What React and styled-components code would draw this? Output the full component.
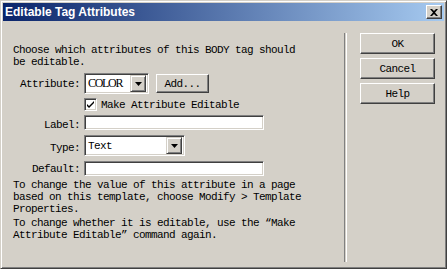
import React from 'react'
import styled, { createGlobalStyle } from 'styled-components'

const GlobalStyle = createGlobalStyle`
  html, body {
    margin: 0;
    padding: 0;
    background: #d4d0c8;
  }
`

const mono = `"Liberation Mono", "DejaVu Sans Mono", monospace`

const Window = styled.div`
  box-sizing: border-box;
  width: 447px;
  height: 269px;
  background: #d4d0c8;
  border: 1px solid;
  border-color: #d4d0c8 #404040 #404040 #d4d0c8;
  box-shadow: inset 1px 1px #ffffff, inset -1px -1px #808080;
  padding: 2px;
  display: flex;
  flex-direction: column;
`

const TitleBar = styled.div`
  height: 18px;
  background: linear-gradient(to right, #0a246a, #a6caf0);
  display: flex;
  align-items: center;
  justify-content: space-between;
  padding: 0 2px 0 2px;
`

const Title = styled.span`
  color: #ffffff;
  font: bold 12px "Liberation Sans", Arial, sans-serif;
`

const CloseButton = styled.div`
  box-sizing: border-box;
  width: 16px;
  height: 14px;
  background: #d4d0c8;
  border: 1px solid;
  border-color: #ffffff #404040 #404040 #ffffff;
  box-shadow: inset -1px -1px #808080;
  display: flex;
  align-items: center;
  justify-content: center;
`

const Body = styled.div`
  flex: 1;
  display: flex;
  padding: 12px 0 0 10px;
`

const Main = styled.div`
  width: 331px;
  font-family: ${mono};
  font-size: 11px;
  letter-spacing: -0.6px;
  color: #000000;
  padding-top: 11px;
`

const Para = styled.p`
  margin: 0 0 ${({ $gap }) => $gap || 0}px 0;
  line-height: 12px;
  white-space: pre;
`

const Form = styled.div`
  display: grid;
  grid-template-columns: 67px auto;
  column-gap: 4px;
  align-items: center;
  margin-bottom: 3px;
`

const Label = styled.span`
  text-align: right;
  white-space: pre;
`

const Row = styled.div`
  display: flex;
  align-items: center;
  gap: 7px;
  margin-bottom: ${({ $mb }) => $mb || 0}px;
`

const Select = styled.div`
  box-sizing: border-box;
  width: ${({ $w }) => $w}px;
  height: 21px;
  background: #ffffff;
  border: 1px solid;
  border-color: #808080 #ffffff #ffffff #808080;
  box-shadow: inset 1px 1px #404040, inset -1px -1px #d4d0c8;
  display: flex;
  align-items: center;
  justify-content: space-between;
  padding: 2px;
`

const SelectText = styled.span`
  padding-left: 1px;
  font-size: ${({ $narrow }) => ($narrow ? '12px' : '11px')};
  letter-spacing: ${({ $narrow }) => ($narrow ? '-1.3px' : '-0.6px')};
  font-family: ${({ $narrow }) =>
    $narrow ? `"Liberation Serif", serif` : mono};
`

const ArrowButton = styled.div`
  box-sizing: border-box;
  width: 16px;
  height: 17px;
  background: #d4d0c8;
  border: 1px solid;
  border-color: #d4d0c8 #404040 #404040 #d4d0c8;
  box-shadow: inset 1px 1px #ffffff, inset -1px -1px #808080;
  display: flex;
  align-items: center;
  justify-content: center;
`

const Button = styled.div`
  box-sizing: border-box;
  width: ${({ $w }) => $w || 75}px;
  height: ${({ $h }) => $h || 21}px;
  background: #d4d0c8;
  border: 1px solid;
  border-color: #ffffff #404040 #404040 #ffffff;
  box-shadow: inset -1px -1px #808080;
  display: flex;
  align-items: center;
  justify-content: center;
  font-family: ${mono};
  font-size: 11px;
  letter-spacing: -0.6px;
  color: #000000;
`

const Field = styled.div`
  box-sizing: border-box;
  width: 180px;
  height: 15px;
  background: #ffffff;
  border: 1px solid;
  border-color: #808080 #ffffff #ffffff #808080;
  box-shadow: inset 1px 1px #404040, inset -1px -1px #d4d0c8;
`

const CheckRow = styled.label`
  grid-column: 2;
  display: flex;
  align-items: center;
  gap: 4px;
  margin: 4px 0 4px 0;
  white-space: pre;
`

const CheckBox = styled.div`
  box-sizing: border-box;
  width: 13px;
  height: 13px;
  background: #ffffff;
  border: 1px solid;
  border-color: #808080 #ffffff #ffffff #808080;
  box-shadow: inset 1px 1px #404040, inset -1px -1px #d4d0c8;
  display: flex;
  align-items: center;
  justify-content: center;
`

const Separator = styled.div`
  width: 1px;
  margin: 0 0 4px 0;
  border-left: 1px solid #808080;
  border-right: 1px solid #ffffff;
`

const Side = styled.div`
  display: flex;
  flex-direction: column;
  gap: 4px;
  padding-left: 13px;
`

const DownArrow = () => (
  <svg width="7" height="4" viewBox="0 0 7 4">
    <path d="M0 0h7L3.5 4z" fill="#000" />
  </svg>
)

const Dropdown = ({ width, value, narrow }) => (
  <Select $w={width}>
    <SelectText $narrow={narrow}>{value}</SelectText>
    <ArrowButton>
      <DownArrow />
    </ArrowButton>
  </Select>
)

export default function App() {
  return (
    <>
      <GlobalStyle />
      <Window>
        <TitleBar>
          <Title>Editable Tag Attributes</Title>
          <CloseButton>
            <svg width="8" height="7" viewBox="0 0 8 7">
              <path
                d="M0 0h2l2 2 2-2h2L5 3.5 8 7H6L4 5 2 7H0l3-3.5z"
                fill="#000"
              />
            </svg>
          </CloseButton>
        </TitleBar>
        <Body>
          <Main>
            <Para>Choose which attributes of this BODY tag should</Para>
            <Para $gap={5}>be editable.</Para>
            <Form>
              <Label>Attribute:</Label>
              <Row>
                <Dropdown width={65} value="COLOR" narrow />
                <Button $w={53} $h={19}>Add...</Button>
              </Row>
              <CheckRow>
                <CheckBox>
                  <svg width="7" height="7" viewBox="0 0 7 7">
                    <path d="M0 3l2 2 5-5v2L2 7 0 5z" fill="#000" />
                  </svg>
                </CheckBox>
                Make Attribute Editable
              </CheckRow>
              <Label>Label:</Label>
              <Row $mb={5}>
                <Field />
              </Row>
              <Label>Type:</Label>
              <Row $mb={5}>
                <Dropdown width={101} value="Text" />
              </Row>
              <Label>Default:</Label>
              <Row>
                <Field />
              </Row>
            </Form>
            <Para>To change the value of this attribute in a page</Para>
            <Para>based on this template, choose Modify &gt; Template</Para>
            <Para $gap={2}>Properties.</Para>
            <Para>To change whether it is editable, use the “Make</Para>
            <Para>Attribute Editable” command again.</Para>
          </Main>
          <Separator />
          <Side>
            <Button>OK</Button>
            <Button>Cancel</Button>
            <Button>Help</Button>
          </Side>
        </Body>
      </Window>
    </>
  )
}
